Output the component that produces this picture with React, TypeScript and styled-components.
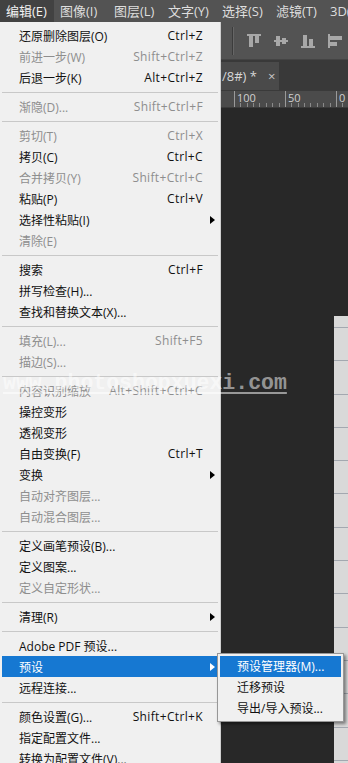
import React from "react";
import styled, { createGlobalStyle } from "styled-components";

const GlobalStyle = createGlobalStyle`
  html, body { margin: 0; padding: 0; background: #282828; }
  * { box-sizing: border-box; }
`;

type Entry =
  | { sep: true }
  | { label: string; shortcut?: string; disabled?: boolean; sub?: boolean; active?: boolean };

const SEP: Entry = { sep: true };

const editMenu: Entry[] = [
  { label: "还原删除图层(O)", shortcut: "Ctrl+Z" },
  { label: "前进一步(W)", shortcut: "Shift+Ctrl+Z", disabled: true },
  { label: "后退一步(K)", shortcut: "Alt+Ctrl+Z" },
  SEP,
  { label: "渐隐(D)...", shortcut: "Shift+Ctrl+F", disabled: true },
  SEP,
  { label: "剪切(T)", shortcut: "Ctrl+X", disabled: true },
  { label: "拷贝(C)", shortcut: "Ctrl+C" },
  { label: "合并拷贝(Y)", shortcut: "Shift+Ctrl+C", disabled: true },
  { label: "粘贴(P)", shortcut: "Ctrl+V" },
  { label: "选择性粘贴(I)", sub: true },
  { label: "清除(E)", disabled: true },
  SEP,
  { label: "搜索", shortcut: "Ctrl+F" },
  { label: "拼写检查(H)..." },
  { label: "查找和替换文本(X)..." },
  SEP,
  { label: "填充(L)...", shortcut: "Shift+F5", disabled: true },
  { label: "描边(S)...", disabled: true },
  SEP,
  { label: "内容识别缩放", shortcut: "Alt+Shift+Ctrl+C", disabled: true },
  { label: "操控变形" },
  { label: "透视变形" },
  { label: "自由变换(F)", shortcut: "Ctrl+T" },
  { label: "变换", sub: true },
  { label: "自动对齐图层...", disabled: true },
  { label: "自动混合图层...", disabled: true },
  SEP,
  { label: "定义画笔预设(B)..." },
  { label: "定义图案..." },
  { label: "定义自定形状...", disabled: true },
  SEP,
  { label: "清理(R)", sub: true },
  SEP,
  { label: "Adobe PDF 预设..." },
  { label: "预设", sub: true, active: true },
  { label: "远程连接..." },
  SEP,
  { label: "颜色设置(G)...", shortcut: "Shift+Ctrl+K" },
  { label: "指定配置文件..." },
  { label: "转换为配置文件(V)..." },
];

const presetMenu = [
  { label: "预设管理器(M)...", active: true },
  { label: "迁移预设" },
  { label: "导出/导入预设..." },
];

const topMenus = ["编辑(E)", "图像(I)", "图层(L)", "文字(Y)", "选择(S)", "滤镜(T)", "3D(D)"];

const uiFont = `"Open Sans", "Noto Sans CJK SC", sans-serif`;

const Screen = styled.div`
  position: relative;
  width: 348px;
  height: 763px;
  overflow: hidden;
  display: flex;
  flex-direction: column;
  background: #282828;
  font-family: ${uiFont};
`;

const MenuBar = styled.div`
  height: 22px;
  display: flex;
  background: #535353;
  flex: none;
`;

const TopItem = styled.div<{ $open?: boolean }>`
  width: 54px;
  flex: none;
  padding-left: 6px;
  font-size: 13px;
  line-height: 22px;
  white-space: nowrap;
  color: ${(p) => (p.$open ? "#f2f2f2" : "#dedede")};
  background: ${(p) => (p.$open ? "#424242" : "transparent")};
`;

const OptionsBar = styled.div`
  height: 38px;
  flex: none;
  display: flex;
  align-items: center;
  padding-left: 232px;
  background: #535353;
  border-bottom: 1px solid #444;
`;

const BarDivider = styled.div`
  width: 2px;
  height: 28px;
  border-left: 1px solid #3c3c3c;
  border-right: 1px solid #666;
  margin-right: 13px;
`;

const AlignIcon = styled.svg`
  width: 14px;
  height: 14px;
  flex: none;
  margin-right: 13px;
  color: #a8a8a8;
`;

const TabBar = styled.div`
  height: 30px;
  flex: none;
  display: flex;
  align-items: flex-end;
  background: #393939;
`;

const DocTab = styled.div`
  width: 279px;
  height: 28px;
  display: flex;
  align-items: center;
  padding-left: 222px;
  gap: 11px;
  background: #4a4a4a;
  color: #d6d6d6;
  font-size: 13px;
  white-space: nowrap;
`;

const TabClose = styled.span`
  font-size: 13px;
  color: #c8c8c8;
`;

const Ruler = styled.div`
  height: 18px;
  flex: none;
  display: flex;
  padding-left: 234px;
  background-color: #4b4b4b;
  background-image: repeating-linear-gradient(to right, #8a8a8a 0 1px, transparent 1px 6.375px);
  background-size: 100% 4px;
  background-position: 234px bottom;
  background-repeat: no-repeat;
  border-top: 1px solid #3a3a3a;
  border-bottom: 1px solid #3a3a3a;
`;

const RulerMark = styled.div`
  width: 51px;
  flex: none;
  border-left: 1px solid #9a9a9a;
  padding-left: 2px;
  font-size: 11px;
  line-height: 13px;
  color: #cfcfcf;
`;

const Canvas = styled.div`
  flex: 1;
  display: flex;
  justify-content: flex-end;
  padding-top: 208px;
`;

const Paper = styled.div`
  width: 14px;
  background-color: #d9d9d9;
  background-image: repeating-linear-gradient(to bottom, transparent 0 11px, #a3a8b0 11px 12px, transparent 12px 33.3px);
`;

const Dropdown = styled.div`
  position: absolute;
  left: 0;
  top: 22px;
  width: 221px;
  padding: 3px 2px 0;
  background: #f0f0f0;
  border-right: 1px solid #cfcfcf;
  font-size: 12px;
`;

const Item = styled.div<{ $disabled?: boolean; $active?: boolean }>`
  height: 21px;
  display: grid;
  grid-template-columns: 1fr auto 12px;
  align-items: center;
  padding: 0 3px 0 17px;
  white-space: nowrap;
  color: ${(p) => (p.$active ? "#ffffff" : p.$disabled ? "#8e8e8e" : "#111111")};
  background: ${(p) => (p.$active ? "#1678d2" : "transparent")};
`;

const Shortcut = styled.span`
  letter-spacing: 0.35px;
`;

const ArrowSlot = styled.span`
  display: flex;
  justify-content: flex-end;
`;

const Arrow = styled.span<{ $light?: boolean }>`
  width: 0;
  height: 0;
  border-top: 4px solid transparent;
  border-bottom: 4px solid transparent;
  border-left: 5px solid ${(p) => (p.$light ? "#ffffff" : "#000000")};
`;

const Separator = styled.div`
  height: 8px;
  display: flex;
  align-items: center;
  &::after {
    content: "";
    flex: 1;
    height: 1px;
    background: #c8c8c8;
  }
`;

const Submenu = styled.div`
  position: absolute;
  left: 217px;
  top: 653px;
  width: 127px;
  padding: 2px;
  background: #f0f0f0;
  border: 1px solid #979797;
  box-shadow: 2px 2px 3px rgba(0, 0, 0, 0.45);
  font-size: 12px;
`;

const SubItem = styled.div<{ $active?: boolean }>`
  height: 21px;
  line-height: 21px;
  padding-left: 17px;
  white-space: nowrap;
  color: ${(p) => (p.$active ? "#ffffff" : "#111111")};
  background: ${(p) => (p.$active ? "#1678d2" : "transparent")};
`;

const Watermark = styled.div`
  position: absolute;
  left: 3px;
  top: 372px;
  font-family: "Liberation Mono", monospace;
  font-weight: bold;
  font-size: 21.5px;
  line-height: 22px;
  color: rgba(255, 255, 255, 0.52);
  text-decoration: underline;
  text-underline-offset: 3px;
  white-space: nowrap;
  pointer-events: none;
`;

const AlignTop = () => (
  <AlignIcon viewBox="0 0 14 14">
    <rect x="0" y="0" width="14" height="2" fill="currentColor" />
    <rect x="2" y="2" width="4" height="11" fill="currentColor" />
    <rect x="8" y="2" width="4" height="7" fill="currentColor" />
  </AlignIcon>
);

const AlignMiddle = () => (
  <AlignIcon viewBox="0 0 14 14">
    <rect x="0" y="6" width="14" height="2" fill="currentColor" />
    <rect x="2" y="2" width="4" height="10" fill="currentColor" />
    <rect x="8" y="4" width="4" height="6" fill="currentColor" />
  </AlignIcon>
);

const AlignBottom = () => (
  <AlignIcon viewBox="0 0 14 14">
    <rect x="0" y="12" width="14" height="2" fill="currentColor" />
    <rect x="2" y="1" width="4" height="11" fill="currentColor" />
    <rect x="8" y="5" width="4" height="7" fill="currentColor" />
  </AlignIcon>
);

const AlignLeft = () => (
  <AlignIcon viewBox="0 0 14 14">
    <rect x="0" y="0" width="2" height="14" fill="currentColor" />
    <rect x="2" y="2" width="12" height="4" fill="currentColor" />
    <rect x="2" y="8" width="7" height="4" fill="currentColor" />
  </AlignIcon>
);

export default function App() {
  return (
    <>
      <GlobalStyle />
      <Screen>
        <MenuBar>
          {topMenus.map((m, i) => (
            <TopItem key={m} $open={i === 0}>
              {m}
            </TopItem>
          ))}
        </MenuBar>
        <OptionsBar>
          <BarDivider />
          <AlignTop />
          <AlignMiddle />
          <AlignBottom />
          <AlignLeft />
        </OptionsBar>
        <TabBar>
          <DocTab>
            /8#) *<TabClose>×</TabClose>
          </DocTab>
        </TabBar>
        <Ruler>
          <RulerMark>100</RulerMark>
          <RulerMark>50</RulerMark>
          <RulerMark>0</RulerMark>
        </Ruler>
        <Canvas>
          <Paper />
        </Canvas>

        <Dropdown>
          {editMenu.map((e, i) =>
            "sep" in e ? (
              <Separator key={i} />
            ) : (
              <Item key={i} $disabled={e.disabled} $active={e.active}>
                <span>{e.label}</span>
                <Shortcut>{e.shortcut}</Shortcut>
                <ArrowSlot>{e.sub && <Arrow $light={e.active} />}</ArrowSlot>
              </Item>
            )
          )}
        </Dropdown>

        <Watermark>www.photoshopxuexi.com</Watermark>

        <Submenu>
          {presetMenu.map((s) => (
            <SubItem key={s.label} $active={s.active}>
              {s.label}
            </SubItem>
          ))}
        </Submenu>
      </Screen>
    </>
  );
}
